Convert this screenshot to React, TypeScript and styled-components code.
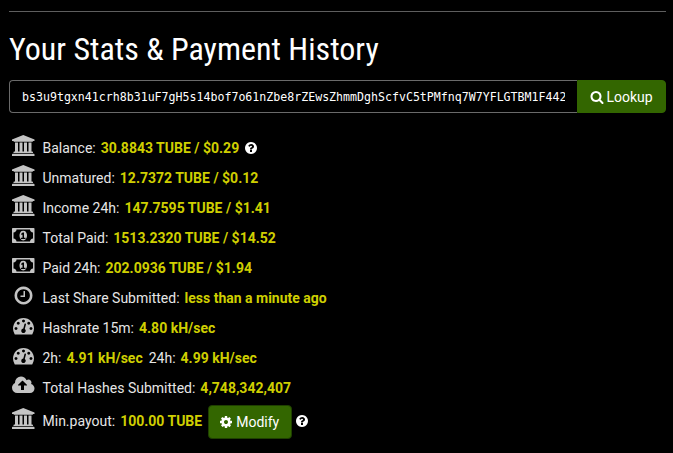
import * as React from 'react';
import styled, { createGlobalStyle } from 'styled-components';

const GlobalStyle = createGlobalStyle`
  html, body {
    margin: 0;
    background: #000;
    color: #e6e6e6;
    font-family: Roboto, "Liberation Sans", sans-serif;
    font-size: 14px;
  }
`;

const Page = styled.div`
  padding: 11px 7px 0 9px;
  height: 442px;
  overflow: hidden;
`;

const Rule = styled.hr`
  margin: 0;
  border: 0;
  border-top: 1px solid #5e5e5e;
`;

const Title = styled.h2`
  margin: 18px 0 0;
  height: 50px;
  color: #fff;
  font-family: Roboto, sans-serif;
  font-size: 32px;
  font-weight: 400;
  line-height: 38px;
  font-stretch: 75%;
  white-space: nowrap;
`;

const SearchBar = styled.div`
  display: flex;
  height: 33px;
`;

const AddressInput = styled.input`
  flex: 1;
  min-width: 0;
  box-sizing: border-box;
  padding: 0 12px;
  border: 1px solid #6a6a6a;
  border-right: 0;
  border-radius: 4px 0 0 4px;
  outline: 0;
  background: #000;
  color: #fff;
  font-family: "DejaVu Sans Mono", monospace;
  font-size: 11.6px;
`;

const GreenButton = styled.button`
  display: inline-flex;
  align-items: center;
  justify-content: center;
  padding: 0;
  background: #336600;
  color: #fff;
  font-family: Roboto, sans-serif;
  font-size: 14px;
  cursor: pointer;
`;

const LookupButton = styled(GreenButton)`
  width: 89px;
  gap: 2px;
  border: 1px solid #336600;
  border-radius: 0 4px 4px 0;
`;

const ModifyButton = styled(GreenButton)`
  width: 84px;
  height: 34px;
  margin-top: 2px;
  padding-right: 2px;
  gap: 3px;
  border: 1px solid #1f4000;
  border-radius: 4px;
`;

const Stats = styled.div`
  display: flex;
  flex-direction: column;
  margin-top: 20px;
`;

const Row = styled.div<{ $tall?: boolean }>`
  display: flex;
  align-items: center;
  gap: 5px;
  height: ${p => (p.$tall ? 34 : 30)}px;
  margin-top: ${p => (p.$tall ? 1 : 0)}px;
  white-space: nowrap;
`;

const IconSlot = styled.span`
  display: inline-flex;
  justify-content: center;
  width: 24px;
  margin: -5px 2px 0 2.5px;
  color: #c4c4c4;
`;

const Value = styled.b`
  color: #cfcf00;
  font-weight: 700;
  margin-right: 1px;
`;

const Help = styled.span<{ $tight?: boolean }>`
  display: inline-flex;
  margin-left: ${p => (p.$tight ? -2 : -1)}px;
  color: #fff;
`;

const Glyph = styled.svg`
  display: block;
  fill: currentColor;
`;

type IconProps = { size?: number };

const makeIcon = (width: number, d: string) => {
  const Icon: React.FC<IconProps> = ({ size = 21 }) => (
    <Glyph
      viewBox={`0 0 ${width} 1792`}
      width={(size * width) / 1792}
      height={size}
      aria-hidden="true"
    >
      <path d={d} />
    </Glyph>
  );
  return Icon;
};

const BankIcon = makeIcon(
  1920,
  'M960 0l960 384v128h-128q0 26-20.5 45t-48.5 19h-1526q-28 0-48.5-19t-20.5-45h-128v-128zm-704 640h256v768h128v-768h256v768h128v-768h256v768h128v-768h256v768h59q28 0 48.5 19t20.5 45v64h-1664v-64q0-26 20.5-45t48.5-19h59v-768zm1595 960q28 0 48.5 19t20.5 45v128h-1920v-128q0-26 20.5-45t48.5-19h1782z'
);

const MoneyIcon = makeIcon(
  1920,
  'M768 1184h384v-96h-128v-448h-114l-148 137 77 80q42-37 55-57h2v288h-128v96zm512-288q0 70-21 142t-59.5 134-101.5 101-138 39-138-39-101.5-101-59.5-134-21-142 21-142 59.5-134 101.5-101 138-39 138 39 101.5 101 59.5 134 21 142zm512 256v-512q-106 0-181-75t-75-181h-1152q0 106-75 181t-181 75v512q106 0 181 75t75 181h1152q0-106 75-181t181-75zm128-832v1152q0 26-19 45t-45 19h-1792q-26 0-45-19t-19-45v-1152q0-26 19-45t45-19h1792q26 0 45 19t19 45z'
);

const ClockIcon = makeIcon(
  1792,
  'M1024 544v448q0 14-9 23t-23 9h-320q-14 0-23-9t-9-23v-64q0-14 9-23t23-9h224v-352q0-14 9-23t23-9h64q14 0 23 9t9 23zm416 352q0-148-73-273t-198-198-273-73-273 73-198 198-73 273 73 273 198 198 273 73 273-73 198-198 73-273zm224 0q0 209-103 385.5t-279.5 279.5-385.5 103-385.5-103-279.5-279.5-103-385.5 103-385.5 279.5-279.5 385.5-103 385.5 103 279.5 279.5 103 385.5z'
);

const GaugeIcon = makeIcon(
  1792,
  'M384 1152q0-53-37.5-90.5t-90.5-37.5-90.5 37.5-37.5 90.5 37.5 90.5 90.5 37.5 90.5-37.5 37.5-90.5zm192-448q0-53-37.5-90.5t-90.5-37.5-90.5 37.5-37.5 90.5 37.5 90.5 90.5 37.5 90.5-37.5 37.5-90.5zm428 481l101-382q6-26-7.5-48.5t-38.5-29.5-48 6.5-30 39.5l-101 382q-60 5-107 43.5t-63 98.5q-20 77 20 146t117 89 146-20 89-117q16-60-6-117t-72-91zm660-33q0-53-37.5-90.5t-90.5-37.5-90.5 37.5-37.5 90.5 37.5 90.5 90.5 37.5 90.5-37.5 37.5-90.5zm-640-640q0-53-37.5-90.5t-90.5-37.5-90.5 37.5-37.5 90.5 37.5 90.5 90.5 37.5 90.5-37.5 37.5-90.5zm448 192q0-53-37.5-90.5t-90.5-37.5-90.5 37.5-37.5 90.5 37.5 90.5 90.5 37.5 90.5-37.5 37.5-90.5zm320 448q0 261-141 483-19 29-54 29h-1402q-35 0-54-29-141-221-141-483 0-182 71-348t191-286 286-191 348-71 348 71 286 191 191 286 71 348z'
);

const CloudIcon = makeIcon(
  1920,
  'M1280 864q0-14-9-23l-352-352q-9-9-23-9t-23 9l-351 351q-10 12-10 24 0 14 9 23t23 9h224v352q0 13 9.5 22.5t22.5 9.5h192q13 0 22.5-9.5t9.5-22.5v-352h224q13 0 22.5-9.5t9.5-22.5zm640 288q0 159-112.5 271.5t-271.5 112.5h-1088q-185 0-316.5-131.5t-131.5-316.5q0-130 70-240t188-165q-2-30-2-43 0-212 150-362t362-150q156 0 285.5 87t188.5 231q71-62 166-62 106 0 181 75t75 181q0 76-41 138 130 31 213.5 135.5t83.5 238.5z'
);

const HelpIcon = makeIcon(
  1792,
  'M1024 1376v-192q0-14-9-23t-23-9h-192q-14 0-23 9t-9 23v192q0 14 9 23t23 9h192q14 0 23-9t9-23zm256-672q0-88-55.5-163t-138.5-116-170-41q-243 0-371 213-15 24 8 42l132 100q7 6 19 6 16 0 25-12 53-68 86-92 34-24 86-24 48 0 85.5 26t37.5 59q0 38-20 61t-68 45q-63 28-115.5 86.5t-52.5 125.5v36q0 14 9 23t23 9h192q14 0 23-9t9-23q0-19 21.5-49.5t54.5-49.5q32-18 49-28.5t46-35 44.5-48 28-60.5 12.5-81zm384 192q0 209-103 385.5t-279.5 279.5-385.5 103-385.5-103-279.5-279.5-103-385.5 103-385.5 279.5-279.5 385.5-103 385.5 103 279.5 279.5 103 385.5z'
);

const CogIcon = makeIcon(
  1792,
  'M1152 896q0-106-75-181t-181-75-181 75-75 181 75 181 181 75 181-75 75-181zm512-109v222q0 12-8 23t-20 13l-185 28q-19 54-39 91 35 50 107 138 10 12 10 25t-9 23q-27 37-99 108t-94 71q-12 0-26-9l-138-108q-44 23-91 38-16 136-29 186-7 28-36 28h-222q-14 0-24.5-8.5t-11.5-21.5l-28-184q-49-16-90-37l-141 107q-10 9-25 9-14 0-25-11-126-114-165-168-7-10-7-23 0-12 8-23 15-21 51-66.5t54-70.5q-27-50-41-99l-183-27q-13-2-21-12.5t-8-23.5v-222q0-12 8-23t19-13l186-28q14-46 39-92-40-57-107-138-10-12-10-24 0-10 9-23 26-36 98.5-107.5t94.5-71.5q13 0 26 10l138 107q44-23 91-38 16-136 29-186 7-28 36-28h222q14 0 24.5 8.5t11.5 21.5l28 184q49 16 90 37l142-107q9-9 24-9 13 0 25 10 129 119 165 170 7 8 7 22 0 12-8 23-15 21-51 66.5t-54 70.5q26 50 41 98l183 28q13 2 21 12.5t8 23.5z'
);

const SearchIcon = makeIcon(
  1792,
  'M1216 832q0-185-131.5-316.5t-316.5-131.5-316.5 131.5-131.5 316.5 131.5 316.5 316.5 131.5 316.5-131.5 131.5-316.5zm512 832q0 52-38 90t-90 38q-54 0-90-38l-343-342q-179 124-399 124-143 0-273.5-55.5t-225-150-150-225-55.5-273.5 55.5-273.5 150-225 225-150 273.5-55.5 273.5 55.5 225 150 150 225 55.5 273.5q0 220-124 399l343 343q37 37 37 90z'
);

type Stat = {
  icon: React.ReactNode;
  parts: [string, string][];
  help?: boolean;
};

const stats: Stat[] = [
  { icon: <BankIcon />, parts: [['Balance:', '30.8843 TUBE / $0.29']], help: true },
  { icon: <BankIcon />, parts: [['Unmatured:', '12.7372 TUBE / $0.12']] },
  { icon: <BankIcon />, parts: [['Income 24h:', '147.7595 TUBE / $1.41']] },
  { icon: <MoneyIcon />, parts: [['Total Paid:', '1513.2320 TUBE / $14.52']] },
  { icon: <MoneyIcon />, parts: [['Paid 24h:', '202.0936 TUBE / $1.94']] },
  { icon: <ClockIcon />, parts: [['Last Share Submitted:', 'less than a minute ago']] },
  { icon: <GaugeIcon />, parts: [['Hashrate 15m:', '4.80 kH/sec']] },
  { icon: <GaugeIcon />, parts: [['2h:', '4.91 kH/sec'], ['24h:', '4.99 kH/sec']] },
  { icon: <CloudIcon />, parts: [['Total Hashes Submitted:', '4,748,342,407']] },
];

export default function App() {
  return (
    <Page>
      <GlobalStyle />
      <Rule />
      <Title>Your Stats &amp; Payment History</Title>
      <SearchBar>
        <AddressInput
          readOnly
          value="bs3u9tgxn41crh8b31uF7gH5s14bof7o61nZbe8rZEwsZhmmDghScfvC5tPMfnq7W7YFLGTBM1F44272"
        />
        <LookupButton type="button">
          <SearchIcon size={14} />
          Lookup
        </LookupButton>
      </SearchBar>
      <Stats>
        {stats.map(stat => (
          <Row key={stat.parts[0][0]}>
            <IconSlot>{stat.icon}</IconSlot>
            {stat.parts.map(([label, value]) => (
              <React.Fragment key={label}>
                <span>{label}</span>
                <Value>{value}</Value>
              </React.Fragment>
            ))}
            {stat.help ? (
              <Help>
                <HelpIcon size={14} />
              </Help>
            ) : null}
          </Row>
        ))}
        <Row $tall>
          <IconSlot>
            <BankIcon />
          </IconSlot>
          <span>Min.payout:</span>
          <Value>100.00 TUBE</Value>
          <ModifyButton type="button">
            <CogIcon size={14} />
            Modify
          </ModifyButton>
          <Help $tight>
            <HelpIcon size={14} />
          </Help>
        </Row>
      </Stats>
    </Page>
  );
}
